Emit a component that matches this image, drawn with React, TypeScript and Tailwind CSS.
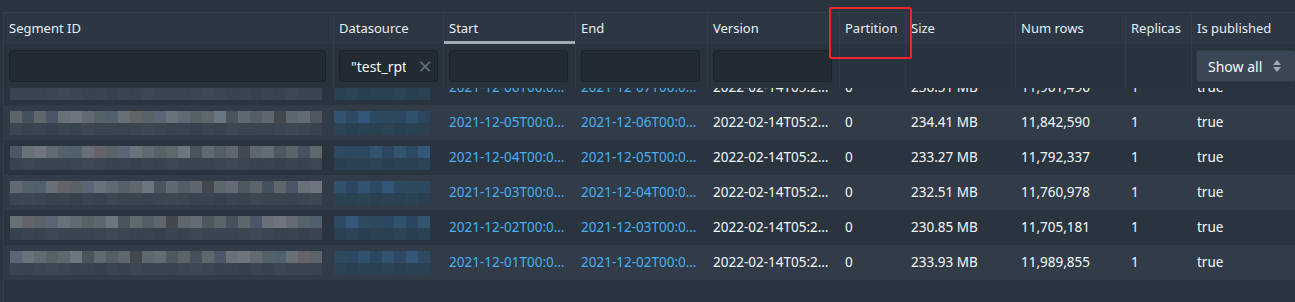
import React from "react";

type Row = {
  start: string;
  end: string;
  version: string;
  partition: string;
  size: string;
  numRows: string;
  replicas: string;
  published: string;
};

const rows: Row[] = [
  { start: "2021-12-06T00:00:00.000Z", end: "2021-12-07T00:00:00.000Z", version: "2022-02-14T05:21:00.000Z", partition: "0", size: "236.51 MB", numRows: "11,961,496", replicas: "1", published: "true" },
  { start: "2021-12-05T00:00:00.000Z", end: "2021-12-06T00:00:00.000Z", version: "2022-02-14T05:21:00.000Z", partition: "0", size: "234.41 MB", numRows: "11,842,590", replicas: "1", published: "true" },
  { start: "2021-12-04T00:00:00.000Z", end: "2021-12-05T00:00:00.000Z", version: "2022-02-14T05:21:00.000Z", partition: "0", size: "233.27 MB", numRows: "11,792,337", replicas: "1", published: "true" },
  { start: "2021-12-03T00:00:00.000Z", end: "2021-12-04T00:00:00.000Z", version: "2022-02-14T05:21:00.000Z", partition: "0", size: "232.51 MB", numRows: "11,760,978", replicas: "1", published: "true" },
  { start: "2021-12-02T00:00:00.000Z", end: "2021-12-03T00:00:00.000Z", version: "2022-02-14T05:21:00.000Z", partition: "0", size: "230.85 MB", numRows: "11,705,181", replicas: "1", published: "true" },
  { start: "2021-12-01T00:00:00.000Z", end: "2021-12-02T00:00:00.000Z", version: "2022-02-14T05:21:00.000Z", partition: "0", size: "233.93 MB", numRows: "11,989,855", replicas: "1", published: "true" },
];

// redaction mosaic colours
const grayTop = ["#5d6770", "#646b74", "#4d5861", "#5b6469", "#45525d", "#5e686c", "#4b5668", "#6a7078", "#6f757e", "#636a74", "#56626a", "#50606e", "#686f77", "#646468", "#5a6468", "#5a6678", "#67737a", "#5f6a72", "#566168", "#5e676e", "#6a7680", "#4a545c", "#5f6a70", "#545e66", "#5f6670", "#43484e"];
const grayBottom = ["#3a4550", "#3c4651", "#37434d", "#3b4650", "#36414b", "#3a4550", "#38434e", "#3d4751", "#3e4852", "#3b4550", "#39444e", "#384550"];
const blueTop = ["#2b4860", "#30526c", "#2c4660", "#325470", "#2e4a62", "#33567a", "#2e4a60", "#2e485e"];
const blueBottom = ["#2a4152", "#2c4356", "#294052", "#2b4254"];

function Mosaic({ count, top, bottom, seed }: { count: number; top: string[]; bottom: string[]; seed: number }) {
  return (
    <div className="flex">
      {Array.from({ length: count }).map((_, i) => (
        <div key={i} className="flex flex-col w-[12px]">
          <div className="h-[12px]" style={{ background: top[(i + seed * 3) % top.length] }} />
          <div className="h-[12px]" style={{ background: bottom[(i * 5 + seed) % bottom.length] }} />
        </div>
      ))}
    </div>
  );
}

const cols = [
  { key: "seg", label: "Segment ID", w: "w-[330px]" },
  { key: "ds", label: "Datasource", w: "w-[110px]" },
  { key: "start", label: "Start", w: "w-[132px]" },
  { key: "end", label: "End", w: "w-[132px]" },
  { key: "version", label: "Version", w: "w-[132px]" },
  { key: "partition", label: "Partition", w: "w-[66px]" },
  { key: "size", label: "Size", w: "w-[110px]" },
  { key: "numRows", label: "Num rows", w: "w-[110px]" },
  { key: "replicas", label: "Replicas", w: "w-[66px]" },
  { key: "published", label: "Is published", w: "w-[130px]" },
];

export default function App() {
  return (
    <div
      className="relative w-[1295px] h-[302px] overflow-hidden bg-[#29343e] text-[13px] text-[#f5f8fa]"
      style={{ fontFamily: '"Noto Sans", "Open Sans", sans-serif' }}
    >
      <div className="h-[12px]" />
      <div className="ml-[3px] w-[1400px] h-[290px] flex flex-col border-l border-t border-[#ffffff0f]">
        {/* header */}
        <div className="flex h-[31px] bg-[#2c3743] shrink-0">
          {cols.map((c) => (
            <div
              key={c.key}
              className={`${c.w} shrink-0 px-[5px] flex items-center border-r border-[#ffffff0a] text-[#e8eef2] ${
                c.key === "start" ? "shadow-[inset_0_-3px_0_0_#a2abb3]" : ""
              }`}
            >
              {c.label}
            </div>
          ))}
        </div>

        {/* filters */}
        <div className="flex h-[44px] bg-[#29333e] shrink-0">
          {cols.map((c) => (
            <div key={c.key} className={`${c.w} shrink-0 px-[5px] pt-[6px] border-r border-[#ffffff0a]`}>
              {c.key === "seg" || c.key === "start" || c.key === "end" || c.key === "version" ? (
                <div className="h-[32px] mr-[2px] rounded-[3px] bg-[#222b34] border border-[#1b232a]" />
              ) : null}
              {c.key === "ds" ? (
                <div className="h-[32px] rounded-[3px] bg-[#222b34] border border-[#1b232a] flex items-center pl-[11px] pr-[5px] text-[14px]">
                  <span className="overflow-hidden whitespace-nowrap w-[55px]">"test_rpt_segments"</span>
                  <span className="ml-auto text-[#5f6e7a] text-[24px] leading-none">×</span>
                </div>
              ) : null}
              {c.key === "published" ? (
                <div className="ml-[-1px] h-[32px] w-[100px] rounded-[3px] bg-[#394653] border border-[#2e3944] flex items-center pl-[11px] text-[14px]">
                  Show all
                  <svg width="10" height="14" viewBox="0 0 10 14" className="ml-[10px]">
                    <path d="M5 1 L9 6 L1 6 Z" fill="#a0aab3" />
                    <path d="M1 8 L9 8 L5 13 Z" fill="#a0aab3" />
                  </svg>
                </div>
              ) : null}
            </div>
          ))}
        </div>

        {/* body */}
        <div className="flex-1 overflow-hidden">
          <div className="-mt-[18px] text-[13.5px]">
            {rows.map((r, i) => (
              <div key={i} className={`flex h-[35px] items-center ${i % 2 === 1 ? "bg-[#313c48]" : "bg-[#2a343f]"}`}>
                <div className="w-[330px] shrink-0 pl-[6px]">
                  <Mosaic count={26} top={grayTop} bottom={grayBottom} seed={i} />
                </div>
                <div className="w-[110px] shrink-0">
                  <Mosaic count={8} top={blueTop} bottom={blueBottom} seed={i} />
                </div>
                <div className="w-[132px] shrink-0 px-[5px] truncate text-[#48aff0]">{r.start}</div>
                <div className="w-[132px] shrink-0 px-[5px] truncate text-[#48aff0]">{r.end}</div>
                <div className="w-[132px] shrink-0 px-[5px] truncate">{r.version}</div>
                <div className="w-[66px] shrink-0 px-[5px] truncate">{r.partition}</div>
                <div className="w-[110px] shrink-0 px-[5px] truncate">{r.size}</div>
                <div className="w-[110px] shrink-0 px-[5px] truncate">{r.numRows}</div>
                <div className="w-[66px] shrink-0 px-[5px] truncate">{r.replicas}</div>
                <div className="w-[130px] shrink-0 px-[5px] truncate">{r.published}</div>
              </div>
            ))}
          </div>
        </div>
      </div>

      {/* annotation box */}
      <div className="absolute left-[829px] top-[7px] w-[83px] h-[52px] border-2 border-[#f5212b] rounded-[2px] pointer-events-none" />
    </div>
  );
}
